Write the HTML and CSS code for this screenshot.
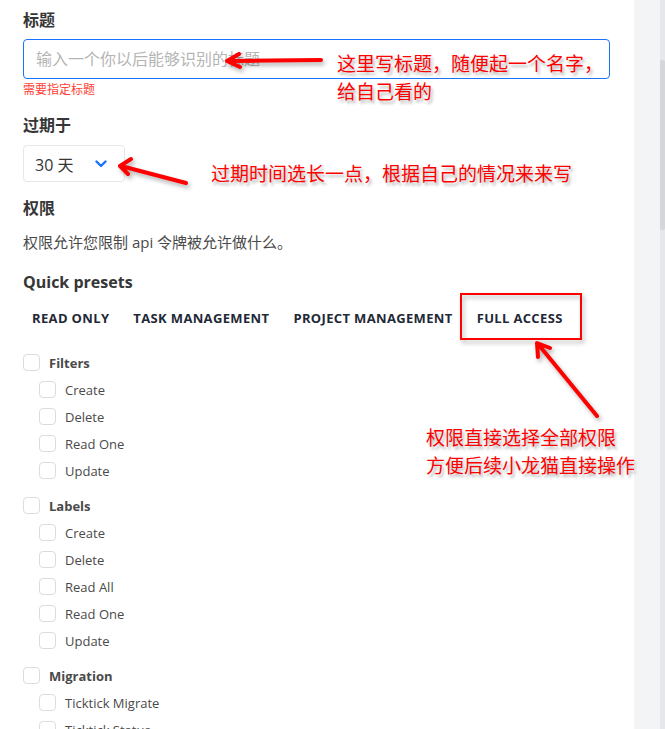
FILE: index.html
```html
<!DOCTYPE html>
<html lang="zh-CN">

<head>
  <meta charset="UTF-8">
  <meta name="viewport" content="width=device-width, initial-scale=1.0">
  <title>新建 API 令牌</title>
  <link rel="stylesheet" href="styles.css">
</head>

<body>
  <div class="page">
    <!-- 表单面板 -->
    <main class="panel">
      <label class="label">标题</label>
      <input class="input" type="text" placeholder="输入一个你以后能够识别的标题">
      <p class="error">需要指定标题</p>

      <label class="label label-expire">过期于</label>
      <div class="select">
        <span>30 天</span>
        <svg class="chevron" width="12" height="8" viewBox="0 0 12 8">
          <path d="M1.5 1.5 L6 6 L10.5 1.5" fill="none" stroke="#1973ff" stroke-width="2.4" stroke-linecap="round" stroke-linejoin="round" />
        </svg>
      </div>

      <h3 class="label label-perm">权限</h3>
      <p class="desc">权限允许您限制 api 令牌被允许做什么。</p>

      <h3 class="presets-title">Quick presets</h3>
      <div class="presets">
        <button class="preset">Read only</button>
        <button class="preset">Task management</button>
        <button class="preset">Project management</button>
        <button class="preset">Full access</button>
      </div>

      <!-- 权限列表 -->
      <div class="groups">
        <div class="group">
          <div class="row head"><span class="box"></span>Filters</div>
          <div class="row"><span class="box"></span>Create</div>
          <div class="row"><span class="box"></span>Delete</div>
          <div class="row"><span class="box"></span>Read One</div>
          <div class="row"><span class="box"></span>Update</div>
        </div>
        <div class="group">
          <div class="row head"><span class="box"></span>Labels</div>
          <div class="row"><span class="box"></span>Create</div>
          <div class="row"><span class="box"></span>Delete</div>
          <div class="row"><span class="box"></span>Read All</div>
          <div class="row"><span class="box"></span>Read One</div>
          <div class="row"><span class="box"></span>Update</div>
        </div>
        <div class="group">
          <div class="row head"><span class="box"></span>Migration</div>
          <div class="row"><span class="box"></span>Ticktick Migrate</div>
          <div class="row"><span class="box"></span>Ticktick Status</div>
        </div>
      </div>
    </main>

    <!-- 滚动条 -->
    <div class="side">
      <div class="track"><div class="thumb"></div></div>
    </div>

    <!-- 红色标注 -->
    <svg class="marks" width="665" height="729" viewBox="0 0 665 729">
      <g fill="none" stroke="#ff0000" stroke-width="4" stroke-linecap="round" stroke-linejoin="round">
        <path d="M321 60 L228 61 M239 54 L227 61 L240 67" />
        <path d="M186 183 L121 166 M131 159 L120 166 L128 174" />
        <path d="M597 416 L538 344 M538 357 L537 343 L550 348" />
      </g>
      <rect x="461" y="294" width="120" height="45" fill="none" stroke="#ff0000" stroke-width="2" />
    </svg>
    <p class="note note-title">这里写标题，随便起一个名字，<br>给自己看的</p>
    <p class="note note-expire">过期时间选长一点，根据自己的情况来来写</p>
    <p class="note note-perm">权限直接选择全部权限<br>方便后续小龙猫直接操作</p>
  </div>
</body>

</html>
```

FILE: styles.css
```css
* {
  margin: 0;
  padding: 0;
  box-sizing: border-box;
}

body {
  font-family: "Open Sans", "Noto Sans CJK SC", sans-serif;
  color: #4a4a4a;
  background: #f3f4f6;
  overflow: hidden;
}

.page {
  position: relative;
  display: flex;
  width: 665px;
  height: 729px;
  overflow: hidden;
}

/* 面板 */
.panel {
  width: 634px;
  background: #fff;
  padding: 8px 0 0 23px;
  display: flex;
  flex-direction: column;
  align-items: flex-start;
}
.panel > * {
  flex-shrink: 0;
}

.label {
  display: block;
  font-size: 16px;
  font-weight: 700;
  line-height: 24px;
  color: #363636;
}

.input {
  margin-top: 7px;
  width: 587px;
  height: 40px;
  border: 1px solid #1973ff;
  border-radius: 4px;
  padding: 0 12px;
  font-family: inherit;
  font-size: 16px;
  outline: none;
}
.input::placeholder {
  color: #b5b5b5;
}

.error {
  margin-top: 3px;
  font-size: 12px;
  line-height: 16px;
  color: #ff4136;
}

.label-expire {
  margin-top: 15px;
}

.select {
  margin-top: 8px;
  width: 102px;
  height: 37px;
  border: 1px solid #e5e7eb;
  border-radius: 4px;
  display: flex;
  align-items: center;
  justify-content: space-between;
  padding: 0 17px 0 11px;
  font-size: 16px;
  color: #363636;
}

.label-perm {
  margin-top: 14px;
}

.desc {
  margin-top: 11px;
  font-size: 15px;
  line-height: 22px;
  color: #4a4a4a;
}

.presets-title {
  margin-top: 17px;
  font-size: 16px;
  font-weight: 700;
  line-height: 24px;
  color: #363636;
}

.presets {
  margin-top: 14px;
  display: flex;
  gap: 24px;
  padding-left: 9px;
}
.preset {
  border: none;
  background: none;
  font-family: inherit;
  font-size: 13px;
  font-weight: 700;
  line-height: 20px;
  text-transform: uppercase;
  color: #1f2937;
  letter-spacing: .35px;
}

/* 复选框 */
.groups {
  margin-top: 21px;
  display: flex;
  flex-direction: column;
  gap: 8px;
}
.row {
  display: flex;
  align-items: center;
  gap: 9px;
  height: 27px;
  padding-left: 16px;
  font-size: 13px;
  color: #4a4a4a;
}
.row.head {
  padding-left: 0;
  font-weight: 700;
}
.box {
  width: 17px;
  height: 17px;
  border: 1.5px solid #d9dce1;
  border-radius: 4px;
  background: #fff;
}

/* 右侧 */
.side {
  flex: 1;
  display: flex;
  justify-content: flex-end;
}
.track {
  width: 5px;
  height: 100%;
  background: #e6e7ea;
  padding-top: 60px;
}
.thumb {
  height: 170px;
  background: #d4d6da;
  border-radius: 2px;
}

/* 标注 */
.marks {
  position: absolute;
  left: 0;
  top: 0;
  filter: drop-shadow(2px 3px 2px rgba(0, 0, 0, .3));
}
.note {
  position: absolute;
  font-family: "Noto Sans CJK SC", sans-serif;
  font-size: 19px;
  line-height: 28px;
  color: #ff0000;
  text-shadow: 2px 3px 3px rgba(0, 0, 0, .3);
  white-space: nowrap;
}
.note-title {
  left: 337px;
  top: 49px;
}
.note-expire {
  left: 211px;
  top: 159px;
}
.note-perm {
  left: 426px;
  top: 423px;
}
```
